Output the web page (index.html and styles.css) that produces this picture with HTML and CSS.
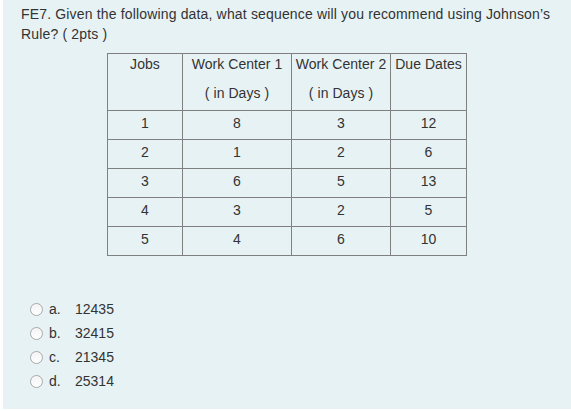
FILE: index.html
```html
<!DOCTYPE html>
<html>
<head>
<meta charset="utf-8">
<link rel="stylesheet" href="styles.css">
</head>
<body>
<div class="panel">
  <p class="question">FE7. Given the following data, what sequence will you recommend using Johnson’s Rule? ( 2pts )</p>
  <table class="data">
    <colgroup>
      <col class="c1"><col class="c2"><col class="c3"><col class="c4">
    </colgroup>
    <thead>
      <tr>
        <th><div class="l1">Jobs</div><div class="l2">&nbsp;</div></th>
        <th><div class="l1">Work Center 1</div><div class="l2">( in Days )</div></th>
        <th><div class="l1">Work Center 2</div><div class="l2">( in Days )</div></th>
        <th><div class="l1">Due Dates</div><div class="l2">&nbsp;</div></th>
      </tr>
    </thead>
    <tbody>
      <tr><td>1</td><td>8</td><td>3</td><td>12</td></tr>
      <tr><td>2</td><td>1</td><td>2</td><td>6</td></tr>
      <tr><td>3</td><td>6</td><td>5</td><td>13</td></tr>
      <tr><td>4</td><td>3</td><td>2</td><td>5</td></tr>
      <tr><td>5</td><td>4</td><td>6</td><td>10</td></tr>
    </tbody>
  </table>
  <ul class="options">
    <li><span class="radio"></span><span class="letter">a.</span><span class="ans">12435</span></li>
    <li><span class="radio"></span><span class="letter">b.</span><span class="ans">32415</span></li>
    <li><span class="radio"></span><span class="letter">c.</span><span class="ans">21345</span></li>
    <li><span class="radio"></span><span class="letter">d.</span><span class="ans">25314</span></li>
  </ul>
</div>
</body>
</html>
```
FILE: styles.css
```css
html, body {
  margin: 0;
  padding: 0;
  background: #ffffff;
}
body {
  font-family: "Liberation Sans", Arial, sans-serif;
  font-size: 14px;
  color: #333333;
}
.panel {
  margin-left: 3px;
  height: 409px;
  background: #e7f2f5;
  padding: 4px 0 0 0;
  box-sizing: border-box;
  overflow: hidden;
}
.question {
  margin: 0 0 0 18px;
  line-height: 20px;
  letter-spacing: 0.16px;
}
.data {
  border-collapse: collapse;
  margin: 9px auto 0;
  border: 1px solid #333333;
  table-layout: fixed;
  width: 359px;
}
.c1 { width: 75px; }
.c2 { width: 109px; }
.c3 { width: 99px; }
.c4 { width: 76px; }
.data th, .data td {
  border: 1px solid #808080;
  text-align: center;
  vertical-align: top;
  font-weight: normal;
  padding: 0;
  line-height: 16px;
  letter-spacing: 0.05px;
}
.data th {
  height: 57px;
  padding-top: 2px;
  box-sizing: border-box;
}
.data th .l1 { margin-bottom: 13px; white-space: nowrap; }
.data td {
  height: 29px;
  padding-top: 4px;
  box-sizing: border-box;
}
.options {
  list-style: none;
  margin: 41px 0 0;
  padding: 0 0 0 27px;
}
.options li {
  display: flex;
  align-items: center;
  height: 24px;
}
.radio {
  width: 11px;
  height: 11px;
  border: 1px solid #a8a8a8;
  border-radius: 50%;
  background: linear-gradient(#f4f4f4, #ffffff);
  margin-right: 6px;
  flex: none;
}
.letter {
  width: 26px;
}
```
